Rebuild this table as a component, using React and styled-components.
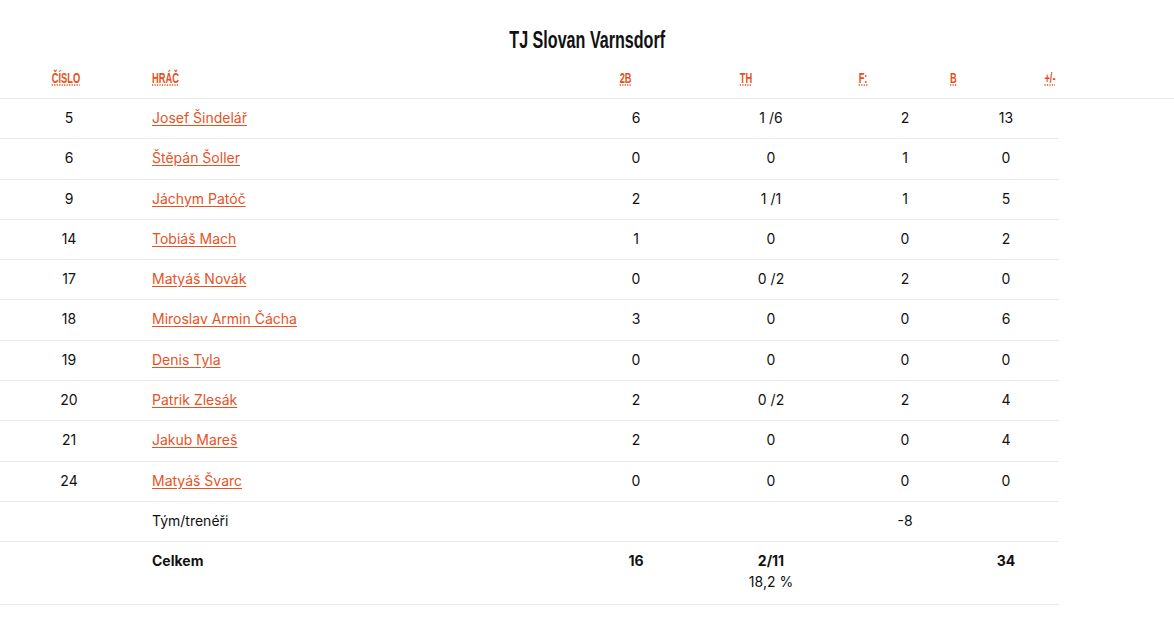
import React from 'react';
import styled, { createGlobalStyle } from 'styled-components';

const GlobalStyle = createGlobalStyle`
  body {
    margin: 0;
    background: #fff;
    font-family: Inter, 'Liberation Sans', sans-serif;
    color: #111;
  }
`;

const Page = styled.div`
  width: 1174px;
  padding-top: 28px;
`;

// no condensed display font installed, so squeeze a bold sans
const Title = styled.h2`
  margin: 0 0 10px;
  text-align: center;
  font-family: 'Liberation Sans', Arial, sans-serif;
  font-weight: 700;
  font-size: 23px;
  line-height: 24px;
  color: #111;
  span {
    display: inline-block;
    transform: scaleX(0.7);
  }
`;

const HeadRow = styled.div`
  display: grid;
  grid-template-columns: 132px 448px 92px 148px 86px 94px 100px 1fr;
  padding: 8px 0 12px;
  border-bottom: 1px solid #e8e8e8;
`;

const HeadCell = styled.div`
  text-align: ${(p) => (p.$left ? 'left' : 'center')};
  padding-left: ${(p) => (p.$left ? '20px' : '0')};
  font-family: 'Liberation Sans', Arial, sans-serif;
  font-weight: 700;
  font-size: 15px;
  line-height: 16px;
  color: #e4501a;
  abbr {
    display: inline-block;
    transform: scaleX(0.62);
    transform-origin: ${(p) => (p.$left ? 'left' : 'center')};
    text-decoration: underline dotted;
    text-underline-offset: 2px;
  }
`;

const Row = styled.div`
  display: grid;
  grid-template-columns: 138px 449px 98px 172px 96px 106px;
  width: 1059px;
  border-bottom: 1px solid #e8e8e8;
  font-size: 14px;
  line-height: 19.3px;
  font-weight: ${(p) => (p.$total ? 700 : 400)};
`;

const Cell = styled.div`
  padding: 9px 0 11px;
  text-align: ${(p) => (p.$left ? 'left' : 'center')};
  padding-left: ${(p) => (p.$left ? '14px' : '0')};
`;

const PlayerLink = styled.a`
  color: #e8521f;
  text-decoration: underline;
  text-underline-offset: 2px;
  cursor: pointer;
`;

const Sub = styled.div`
  font-weight: 400;
  line-height: 22px;
`;

const players = [
  ['5', 'Josef Šindelář', '6', '1 /6', '2', '13'],
  ['6', 'Štěpán Šoller', '0', '0', '1', '0'],
  ['9', 'Jáchym Patóč', '2', '1 /1', '1', '5'],
  ['14', 'Tobiáš Mach', '1', '0', '0', '2'],
  ['17', 'Matyáš Novák', '0', '0 /2', '2', '0'],
  ['18', 'Miroslav Armin Čácha', '3', '0', '0', '6'],
  ['19', 'Denis Tyla', '0', '0', '0', '0'],
  ['20', 'Patrik Zlesák', '2', '0 /2', '2', '4'],
  ['21', 'Jakub Mareš', '2', '0', '0', '4'],
  ['24', 'Matyáš Švarc', '0', '0', '0', '0'],
];

const heads = [
  ['ČÍSLO', 'Číslo'],
  ['HRÁČ', 'Hráč', true],
  ['2B', 'Dvojky'],
  ['TH', 'Trestné hody'],
  ['F:', 'Fauly'],
  ['B', 'Body'],
  ['+/-', 'Plus/minus'],
];

export default function App() {
  return (
    <Page>
      <GlobalStyle />
      <Title>
        <span>TJ Slovan Varnsdorf</span>
      </Title>
      <HeadRow>
        {heads.map(([label, title, left]) => (
          <HeadCell key={label} $left={left}>
            <abbr title={title}>{label}</abbr>
          </HeadCell>
        ))}
      </HeadRow>
      {players.map((p) => (
        <Row key={p[0]}>
          <Cell>{p[0]}</Cell>
          <Cell $left>
            <PlayerLink>{p[1]}</PlayerLink>
          </Cell>
          <Cell>{p[2]}</Cell>
          <Cell>{p[3]}</Cell>
          <Cell>{p[4]}</Cell>
          <Cell>{p[5]}</Cell>
        </Row>
      ))}
      <Row>
        <Cell />
        <Cell $left>Tým/trenéři</Cell>
        <Cell />
        <Cell />
        <Cell>-8</Cell>
        <Cell />
      </Row>
      <Row $total>
        <Cell />
        <Cell $left>Celkem</Cell>
        <Cell>16</Cell>
        <Cell>
          2/11
          <Sub>18,2 %</Sub>
        </Cell>
        <Cell />
        <Cell>34</Cell>
      </Row>
    </Page>
  );
}
